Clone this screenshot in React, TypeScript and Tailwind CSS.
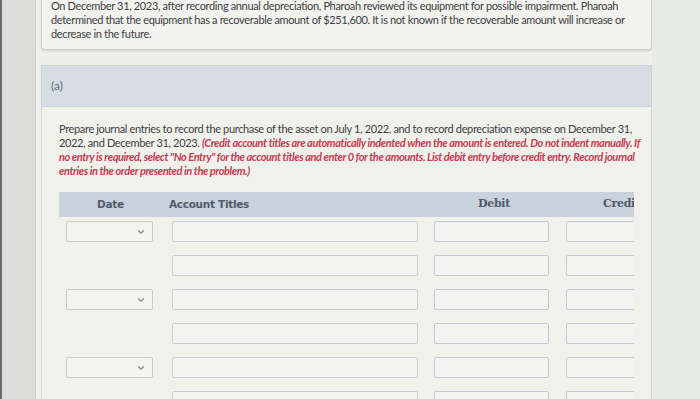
import { ChevronDown } from "lucide-react";

const rows = [true, false, true, false, true, false];

const Row = ({ date }: { date: boolean }) => (
  <div className="flex h-[34px] items-start">
    <div className="w-[113px] shrink-0 pl-[7px]">
      {date && (
        <div className="flex h-[21px] w-[87px] items-center justify-end rounded-[2px] border border-[#c9cbc9] bg-[#f3f3f0] pr-[6px]">
          <ChevronDown size={10} strokeWidth={3} className="text-[#8a8f96]" />
        </div>
      )}
    </div>
    <div className="h-[21px] w-[246px] shrink-0 rounded-[2px] border border-[#c9ccd0] bg-[#f3f4f1]" />
    <div className="ml-[16px] h-[21px] w-[115px] shrink-0 rounded-[2px] border border-[#c5c8d0] bg-[#f3f4f1]" />
    <div className="ml-[17px] h-[21px] w-[115px] shrink-0 rounded-[2px] border border-[#c5c8d0] bg-[#f3f4f1]" />
  </div>
);

export default function App() {
  return (
    <div className="flex h-[399px] w-[700px] overflow-hidden bg-[#e5ebe3] font-['Lato',sans-serif] text-[#3d3f44]">
      <div className="w-[2px] shrink-0 bg-[#6a6a6a]" />
      <div className="w-[33px] shrink-0 bg-[#dcdcda]" />
      <div className="w-[617px] shrink-0 border-l border-[#cfd0cd] bg-[#eeefea] pl-[5px]">
        {/* problem statement */}
        <div className="-mt-[5px] rounded-[3px] border border-[#cdcfcc] bg-[#f2f2ee] pb-[8px] pl-[9px] pt-[3px] text-[11px] leading-[14px] tracking-[-0.35px] shadow-[0_1px_2px_rgba(0,0,0,0.12)]">
          <div className="whitespace-nowrap">On December 31, 2023, after recording annual depreciation, Pharoah reviewed its equipment for possible impairment. Pharoah</div>
          <div className="whitespace-nowrap">determined that the equipment has a recoverable amount of $251,600. It is not known if the recoverable amount will increase or</div>
          <div className="whitespace-nowrap">decrease in the future.</div>
        </div>

        {/* part header */}
        <div className="mt-[15px] flex h-[42px] items-center border border-[#cdd2d9] bg-[#d6dce4] pl-[9px] text-[12px] text-[#5c6a7d]">
          (a)
        </div>

        {/* part body */}
        <div className="h-[300px] border-x border-[#d4d6d2] bg-[#f1f1ec] pl-[17px] pt-[15px]">
          <div className="text-[11px] leading-[14px] tracking-[-0.35px]">
            <div className="whitespace-nowrap">Prepare journal entries to record the purchase of the asset on July 1, 2022, and to record depreciation expense on December 31,</div>
            <div className="whitespace-nowrap">
              2022, and December 31, 2023.{" "}
              <span className="font-bold italic tracking-[-0.4px] text-[#c63b52]">(Credit account titles are automatically indented when the amount is entered. Do not indent manually. If</span>
            </div>
            <div className="whitespace-nowrap font-bold italic tracking-[-0.42px] text-[#c63b52]">no entry is required, select "No Entry" for the account titles and enter 0 for the amounts. List debit entry before credit entry. Record journal</div>
            <div className="whitespace-nowrap font-bold italic tracking-[-0.42px] text-[#c63b52]">entries in the order presented in the problem.)</div>
          </div>

          {/* journal table */}
          <div className="mt-[14px] w-[575px] overflow-hidden">
            <div className="w-[640px]">
              <div className="flex h-[25px] items-center bg-[#c9d1dd] font-bold text-[#4f5a6b]">
                <div className="w-[110px] shrink-0 pl-[38px] font-['DejaVu_Sans',sans-serif] text-[10.5px] tracking-[-0.3px]">Date</div>
                <div className="w-[300px] shrink-0 font-['DejaVu_Sans',sans-serif] text-[10.5px] tracking-[-0.3px]">Account Titles</div>
                <div className="w-[134px] shrink-0 pl-[9px] font-['DejaVu_Serif',serif] text-[11px] tracking-[-0.3px]">Debit</div>
                <div className="shrink-0 font-['DejaVu_Serif',serif] text-[11px] tracking-[-0.3px]">Credit</div>
              </div>
              <div className="mt-[4px]">
                {rows.map((d, i) => (
                  <Row key={i} date={d} />
                ))}
              </div>
            </div>
          </div>
        </div>
      </div>
      <div className="flex-1 bg-[#e6ece2]" />
    </div>
  );
}
